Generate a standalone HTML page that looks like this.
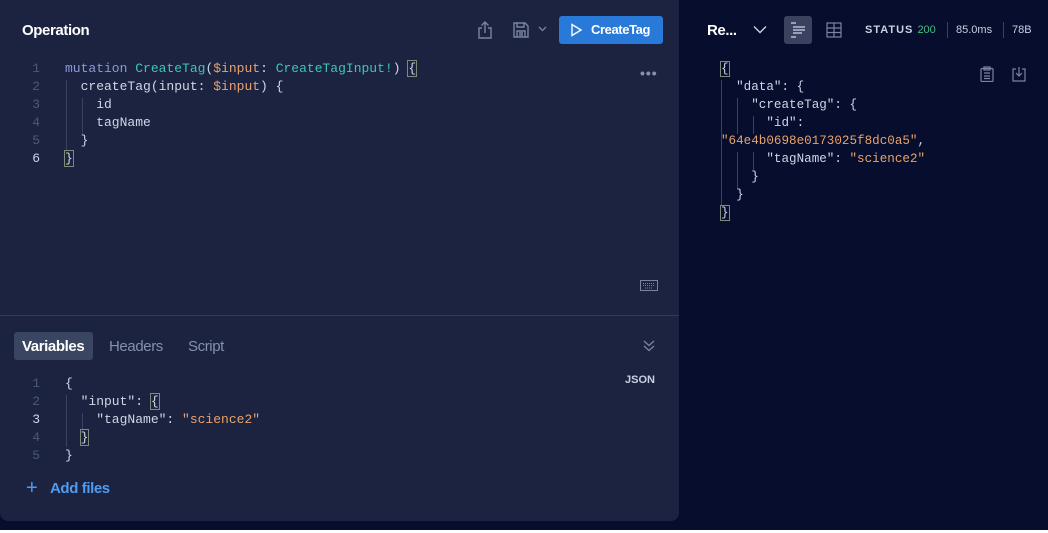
<!DOCTYPE html>
<html><head><meta charset="utf-8"><style>
*{margin:0;padding:0;box-sizing:border-box}
body{width:1048px;height:533px;background:#fff;position:relative;overflow:hidden;font-family:"Liberation Sans",sans-serif}
.bg{position:absolute;left:0;top:0;width:1048px;height:530px;background:#060d2d}
.left{position:absolute;left:0;top:0;width:679px;height:521px;background:#1c2340;border-radius:0 0 8px 8px}
.mono{font-family:"Liberation Mono",monospace;font-size:13px;line-height:18px;white-space:pre}
.ln{position:absolute;left:24px;width:16px;text-align:right;color:#4d5878}
.code{position:absolute;left:65px;color:#cfd6e6}
.k{color:#8a9ad8}.t{color:#3cc7b5}.v{color:#e8a26a}.s{color:#e8a26a}.p{color:#cfd6e6}
.br{outline:1px solid #7f8a78}
.guide{position:absolute;width:1px;background:#3a4260}
.cs{letter-spacing:-0.4px}
</style></head><body>
<div class="bg"></div>
<div class="left">
  <div class="cs" style="position:absolute;left:22px;top:22px;font-size:15px;font-weight:bold;color:#fff">Operation</div>
  <svg style="position:absolute;left:477px;top:20px" width="16" height="20" viewBox="0 0 16 20" fill="none" stroke="#7b849e" stroke-width="1.4"><path d="M8 2v11M4.5 5.5L8 2l3.5 3.5M5 8H2v10h12V8h-3"/></svg>
  <svg style="position:absolute;left:512px;top:21px" width="18" height="18" viewBox="0 0 18 18" fill="none" stroke="#7b849e" stroke-width="1.4"><path d="M2 2h11l3 3v11H2zM5 2v4h7V2M5 16v-6h8v6M7 12h4M7 14h4"/></svg>
  <svg style="position:absolute;left:538px;top:26px" width="9" height="6" viewBox="0 0 9 6" fill="none" stroke="#7b849e" stroke-width="1.3"><path d="M1 1l3.5 3.5L8 1"/></svg>
  <div class="cs" style="position:absolute;left:559px;top:16px;width:104px;height:28px;background:#2879d8;border-radius:3px;color:#fff;font-size:13px;font-weight:bold;line-height:28px;padding-left:32px">CreateTag</div>
  <svg style="position:absolute;left:570px;top:23px" width="12" height="14" viewBox="0 0 12 14" fill="none" stroke="#fff" stroke-width="1.4"><path d="M2 1.5v11L11 7z"/></svg>
  <div style="position:absolute;left:640px;top:69px;color:#8791ad;font-size:14px;letter-spacing:1px;font-weight:bold;line-height:8px">•••</div>

  <div class="mono ln" style="top:60px">1
2
3
4
5
<span style="color:#cfd6e6">6</span></div>
  <div class="guide" style="left:66px;top:80px;height:70px"></div>
  <div class="guide" style="left:82px;top:98px;height:36px"></div>
  <div class="mono code" style="top:60px"><span class="k">mutation</span> <span class="t">CreateTag</span>(<span class="v">$input</span>: <span class="t">CreateTagInput!</span>) <span class="br">{</span>
  createTag(input: <span class="v">$input</span>) {
    id
    tagName
  }
<span class="br">}</span></div>
  <svg style="position:absolute;left:640px;top:280px" width="18" height="11" viewBox="0 0 18 11" fill="none" stroke="#7b849e" stroke-width="1"><rect x="0.5" y="0.5" width="17" height="10"/><path d="M3 3.5h12M3 5.5h12M5 8h8" stroke-dasharray="1 1"/></svg>
  <div style="position:absolute;left:0;top:315px;width:679px;height:1px;background:#323a58"></div>
  <div style="position:absolute;left:14px;top:332px;width:79px;height:28px;background:#3a4562;border-radius:3px"></div>
  <div class="cs" style="position:absolute;left:22px;top:338px;font-size:15px;font-weight:bold;color:#fff">Variables</div>
  <div class="cs" style="position:absolute;left:109px;top:338px;font-size:15px;color:#8590ae">Headers</div>
  <div class="cs" style="position:absolute;left:188px;top:338px;font-size:15px;color:#8590ae">Script</div>
  <svg style="position:absolute;left:642px;top:339px" width="14" height="14" viewBox="0 0 14 14" fill="none" stroke="#7b849e" stroke-width="1.3"><path d="M2 2l5 4.5L12 2M2 7l5 4.5L12 7"/></svg>
  <div style="position:absolute;left:625px;top:374px;font-size:11px;font-weight:bold;color:#c9d0e0">JSON</div>
  <div class="mono ln" style="top:375px">1
2
<span style="color:#cfd6e6">3</span>
4
5</div>
  <div class="guide" style="left:66px;top:395px;height:52px"></div>
  <div class="guide" style="left:82px;top:413px;height:16px"></div>
  <div class="mono code" style="top:375px">{
  "input": <span class="br">{</span>
    "tagName": <span class="s">"science2"</span>
  <span class="br">}</span>
}</div>
  <div style="position:absolute;left:26px;top:478px;color:#4f9bf0;font-size:20px;line-height:20px">+</div>
  <div class="cs" style="position:absolute;left:50px;top:480px;color:#4f9bf0;font-size:15px;font-weight:bold">Add files</div>
</div>

<div class="cs" style="position:absolute;left:707px;top:22px;font-size:15px;font-weight:bold;color:#fff">Re...</div>
<svg style="position:absolute;left:753px;top:25px" width="14" height="9" viewBox="0 0 14 9" fill="none" stroke="#c9d0e0" stroke-width="1.4"><path d="M1 1.5l6 6 6-6"/></svg>
<div style="position:absolute;left:784px;top:16px;width:28px;height:28px;background:#3a4260;border-radius:3px"></div>
<svg style="position:absolute;left:790px;top:22px" width="16" height="16" viewBox="0 0 16 16" fill="none" stroke="#d0d6e6" stroke-width="1.2"><path d="M1 1h5M3 5h12M3 8h12M3 11h9M1 15h5"/></svg>
<svg style="position:absolute;left:826px;top:22px" width="16" height="16" viewBox="0 0 16 16" fill="none" stroke="#7b849e" stroke-width="1.2"><rect x="1" y="1" width="14" height="14"/><path d="M1 6h14M1 10.5h14M8 1v14"/></svg>
<div style="position:absolute;left:865px;top:24px;font-size:11px;font-weight:bold;color:#c9d0e0;letter-spacing:1px">STATUS <span style="color:#3fbf7f;font-weight:normal;letter-spacing:0">200</span></div>
<div style="position:absolute;left:947px;top:22px;width:1px;height:16px;background:#3a4260"></div>
<div style="position:absolute;left:956px;top:24px;font-size:11px;color:#c9d0e0">85.0ms</div>
<div style="position:absolute;left:1003px;top:22px;width:1px;height:16px;background:#3a4260"></div>
<div style="position:absolute;left:1012px;top:24px;font-size:11px;color:#c9d0e0">78B</div>
<svg style="position:absolute;left:980px;top:66px" width="14" height="16" viewBox="0 0 14 16" fill="none" stroke="#7b849e" stroke-width="1.2"><rect x="1" y="2.5" width="12" height="13" rx="1"/><rect x="4" y="1" width="6" height="3"/><path d="M4 7h6M4 10h6M4 12.5h6"/></svg>
<svg style="position:absolute;left:1012px;top:66px" width="14" height="16" viewBox="0 0 14 16" fill="none" stroke="#7b849e" stroke-width="1.2"><path d="M4 3H1v12h12V3h-3M7 1v9M4 7l3 3 3-3"/></svg>
<div class="guide" style="left:721px;top:80px;height:126px"></div>
<div class="guide" style="left:737px;top:98px;height:36px"></div>
<div class="guide" style="left:737px;top:152px;height:36px"></div>
<div class="guide" style="left:753px;top:116px;height:18px"></div>
<div class="guide" style="left:753px;top:152px;height:18px"></div>
<div class="mono" style="position:absolute;left:721px;top:60px;color:#cfd6e6;font-size:12.6px"><span class="br">{</span>
  "data": {
    "createTag": {
      "id":
<span class="s">"64e4b0698e0173025f8dc0a5"</span>,
      "tagName": <span class="s">"science2"</span>
    }
  }
<span class="br">}</span></div>
</body></html>
